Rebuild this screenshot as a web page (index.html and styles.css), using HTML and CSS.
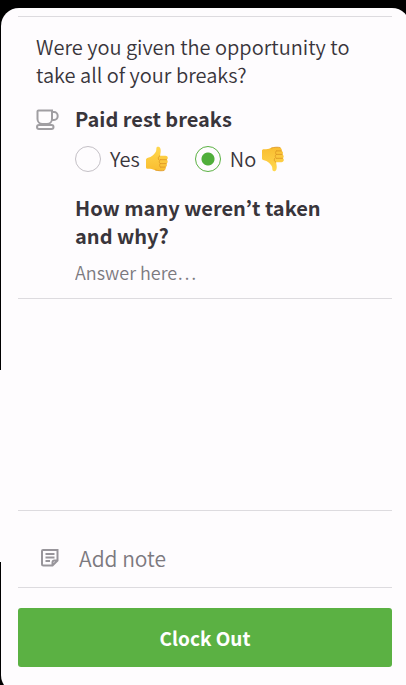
FILE: index.html
```html
<!DOCTYPE html>
<html lang="en">
<head>
<meta charset="utf-8">
<meta name="viewport" content="width=device-width, initial-scale=1">
<title>Clock Out</title>
<link rel="stylesheet" href="styles.css">
</head>
<body>
<form class="sheet">
  <section class="questions">
    <p class="intro">Were you given the opportunity to take all of your breaks?</p>
    <fieldset class="break">
      <svg class="cup" viewBox="0 0 24 24" aria-hidden="true">
        <path d="M2.500 2.500h13.500v8.500a5 5 0 0 1-5 5H6.500a5 5 0 0 1-5-5V3.500a1 1 0 0 1 1-1zM16 4h2a3.700 4 0 0 1 0 8h-2M3 17h12.500a1.800 1.800 0 0 1 0 4h-12.500a1.800 1.800 0 0 1 0-4z"/>
      </svg>
      <div class="break-body">
        <h2 id="break-title">Paid rest breaks</h2>
        <div class="choices" role="radiogroup" aria-labelledby="break-title">
          <label class="choice">
            <input type="radio" name="breaks" value="yes">
            <span>Yes</span>
            <svg class="thumb" viewBox="0 0 24 26" aria-hidden="true"><use href="#thumb-shape"/></svg>
          </label>
          <label class="choice">
            <input type="radio" name="breaks" value="no" checked>
            <span>No</span>
            <svg class="thumb thumb-down" viewBox="0 0 24 26" aria-hidden="true"><use href="#thumb-shape"/></svg>
          </label>
        </div>
        <label class="why" for="why">How many weren’t taken and why?</label>
        <input class="answer" id="why" type="text" placeholder="Answer here…">
      </div>
    </fieldset>
  </section>
  <section class="note">
    <svg class="note-icon" viewBox="0 0 18 18" aria-hidden="true">
      <path d="M2 1h14.500v10.500l-5 5H2.500a1.500 1.500 0 0 1-1.500-1.500V2a1 1 0 0 1 1-1zM16.500 11.500h-3a2 2 0 0 0-2 2v3M4.500 5h9M4.500 8.500h9M4.500 12h4.500"/>
    </svg>
    <input type="text" placeholder="Add note" aria-label="Add note">
  </section>
  <button class="submit" type="submit">Clock Out</button>
</form>
<svg class="defs" aria-hidden="true">
  <defs>
    <linearGradient id="skin" x1="0" y1="0" x2="0" y2="1">
      <stop offset="0" stop-color="#ffd84f"/>
      <stop offset="1" stop-color="#f9bd30"/>
    </linearGradient>
    <g id="thumb-shape">
      <path fill="url(#skin)" d="M1 13.500c0-1 1-1.500 2-1.800 3.500-1 5.500-2.500 7.500-5.500 1-1.600.7-2.500.9-4C11.600.4 14.200.2 15.300 2.300c.9 2.300.3 4.700-.3 7.500h5.500c2.700 0 2.900 3.400 1.200 3.900 1.500.7 1.300 3.400-.4 3.900 1.200.9.800 3.200-.8 3.500.8 1.200 0 3.300-2 3.500-3.500.4-6.500.4-9-.6C7.500 22.900 6 22.700 3 22.700c-1.300 0-2-.5-2-1.500z"/>
      <path fill="none" stroke="#dc9422" stroke-width=".8" stroke-linecap="round" d="M15.500 13.700h6M15.300 17.600h6M15.500 21.100h5M14.800 9.800c-1.700 1-2 2.500-1 3.900M15.300 13.700c-1.400 1-1.400 2.800 0 3.900-1 1-1 2.500 0 3.500M10.500 24c3 .9 6 1 8.500.5"/>
    </g>
  </defs>
</svg>
</body>
</html>
```
FILE: styles.css
```css
* {
  box-sizing: border-box;
}

html {
  background: #000;
}

body {
  margin: 0;
  min-height: 100vh;
  overflow: hidden;
  background: linear-gradient(#000 370px, #fefcfe 370px, #fefcfe 562px, #000 562px);
  color: #39353b;
  font: 350 20px/28px "Noto Sans CJK JP", "Noto Sans", sans-serif;
}

.sheet {
  display: flex;
  flex-direction: column;
  min-height: 100vh;
  margin: 8px -4px 0 1px;
  padding: 8px 18px 24px 17px;
  border-radius: 18px;
  background: #fefcfe;
}

.questions {
  padding: 16px 18px 0;
  border-top: 1px solid #dddbdf;
}

p,
h2 {
  margin: 0;
}

.intro {
  margin-bottom: 16px;
}

.break {
  display: flex;
  gap: 15px;
  min-width: 0;
  margin: 0 -18px;
  padding: 0 0 0 18px;
  border: 0;
  border-bottom: 1px solid #dddbdf;
}

.cup {
  flex: none;
  width: 24px;
  height: 24px;
  margin-top: 3px;
  fill: none;
  stroke: #a09ea2;
  stroke-width: 2;
}

.break-body {
  flex: 1;
  min-width: 0;
}

h2,
.why {
  font-size: 20px;
  font-weight: 700;
  line-height: 28px;
}

.choices {
  display: flex;
  gap: 26px;
  margin: 12px 0 22px;
}

.choice {
  display: flex;
  align-items: center;
  height: 27px;
}

.choice input {
  appearance: none;
  width: 26px;
  height: 26px;
  margin: 0 9px 0 0;
  border: 1px solid #c4c0c6;
  border-radius: 50%;
}

.choice input:checked {
  border-color: #5bb143;
  background: radial-gradient(circle, #4fae3a 6px, transparent 7px);
}

.thumb {
  width: 24px;
  height: 26px;
  margin-left: 5px;
}

.thumb-down {
  transform: scaleY(-1);
}

.why {
  display: block;
  max-width: 260px;
}

input {
  padding: 0;
  border: 0;
  outline: 0;
  background: none;
  color: inherit;
  font-family: inherit;
  font-weight: inherit;
}

.answer {
  display: block;
  width: 100%;
  height: 24px;
  margin: 10px 0 14px;
  font-size: 18px;
}

input::placeholder {
  color: #7c797f;
  opacity: 1;
}

.note {
  display: flex;
  align-items: center;
  gap: 20px;
  height: 78px;
  margin-top: 211px;
  padding: 29px 23px 11px;
  border: solid #dddbdf;
  border-width: 1px 0;
}

.note-icon {
  flex: none;
  width: 18px;
  height: 18px;
  fill: none;
  stroke: #98959b;
  stroke-width: 2;
}

.note input {
  flex: 1;
  min-width: 0;
  height: 32px;
  font-size: 21px;
}

.submit {
  height: 59px;
  margin-top: 20px;
  border: 0;
  border-radius: 3px;
  background: #5bb143;
  color: #fff;
  font-family: inherit;
  font-size: 19px;
  font-weight: 700;
}

.defs {
  position: absolute;
  width: 0;
  height: 0;
}
```
